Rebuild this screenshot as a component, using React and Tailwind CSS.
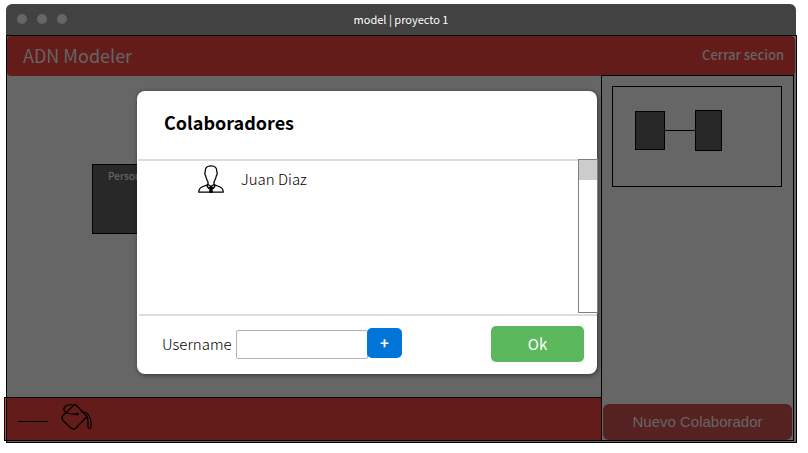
function TitleBar() {
  return (
    <div className="relative mr-px flex h-[31px] items-center justify-center rounded-t-md bg-[#424242] pb-px">
      <div className="absolute left-[11px] flex gap-[10px]">
        <span className="size-[10px] rounded-full bg-[#666]" />
        <span className="size-[10px] rounded-full bg-[#666]" />
        <span className="size-[10px] rounded-full bg-[#666]" />
      </div>
      <span className="text-[11px] text-white">model | proyecto 1</span>
    </div>
  );
}

function Header() {
  return (
    <header className="mr-px flex h-10 shrink-0 items-center justify-between rounded bg-[#631c19] pr-[11px] pb-[2px] pl-4 text-[#666]">
      <h1 className="text-[18px]">ADN Modeler</h1>
      <a href="#salir" className="text-[13px] font-medium">Cerrar secion</a>
    </header>
  );
}

function PaintBucket() {
  return (
    <svg viewBox="0 0 32 30" className="h-[30px] w-8" fill="none" stroke="black" strokeWidth="1.2" strokeLinecap="round" strokeLinejoin="round" aria-hidden="true">
      <path d="M14 3Q15 2 16 3L27 14.500 16 26Q13.500 28.500 11 26L3 18.500Q.8 16 3 13.500Z" />
      <path d="M14 3C8 2 3.500 4 3.800 7.500 4.200 11 9 12.500 17 12" />
      <circle cx="17.200" cy="12" r="0.900" fill="black" />
      <path d="M21.500 10c5.500-1 9 4 9.500 10v5c-.3 2-2.800 2-3 0v-5c0-2-.5-4-1.200-5.200" />
    </svg>
  );
}

function Person() {
  return (
    <svg viewBox="0 0 26 28" className="h-7 w-[26px]" fill="none" stroke="black" strokeWidth="1.3" strokeLinejoin="round" aria-hidden="true">
      <path d="M13 .8C9 .8 6.800 3 7.200 7c-.8.500-.4 3 .4 3.500C8.100 14 9.300 15.500 10 17v2.500L13 21.500l3-2V17c.7-1.500 1.900-3 2.400-6.500.8-.5 1.200-3 .4-3.500C19.200 3 17 .8 13 .8Z" />
      <path d="M10 19.500 4 22C1.500 23 .8 25 .8 27.200h24.400c0-2.200-.7-4.200-3.200-5.200l-6-2.500" />
      <path d="m9.800 19.500-.8 1.500 1.800 2.500L13 21.500l2.200 2L17 21l-.8-1.500" />
      <path d="M12.200 21.800h1.600l.4 5.200h-2.400Z" fill="black" />
    </svg>
  );
}

function Sidebar() {
  return (
    <aside className="-mt-px mr-[2px] mb-px flex w-[193px] shrink-0 flex-col justify-between border border-black px-px pt-[10px]">
      <div className="mr-[10px] ml-[9px] h-[101px] border border-black">
        <svg width="168" height="99" stroke="black" fill="#282828" aria-label="Vista previa">
          <rect x="22.500" y="24.500" width="29" height="38" />
          <rect x="82.500" y="23.500" width="26" height="40" />
          <path d="M52 43.500h30" />
        </svg>
      </div>
      <button className="h-9 rounded-md bg-[#562221] font-['Liberation_Sans',sans-serif] text-[15px] text-[#666]">
        Nuevo Colaborador
      </button>
    </aside>
  );
}

function Toolbar() {
  return (
    <footer className="mb-px -ml-[3px] flex h-11 border-y border-l border-black bg-[#631c19]">
      <span className="w-px bg-[#d9453c]" />
      <span className="w-px bg-black" />
      <div className="flex items-start gap-3 pt-1 pl-[11px]">
        <span className="mt-[19px] h-px w-[30px] bg-black" />
        <PaintBucket />
      </div>
    </footer>
  );
}

function Dialog() {
  return (
    <section role="dialog" aria-labelledby="dialog-title" className="absolute top-[91px] left-[137px] w-[460px] rounded-lg bg-white text-black shadow-[1px_1px_5px_rgba(0,0,0,0.5)]">
      <div className="h-[68px] pt-[19px] pl-[27px]">
        <h2 id="dialog-title" className="text-[18px] font-bold">Colaboradores</h2>
      </div>
      <div className="ml-px flex h-[155px]">
        <ul className="flex-1 border-t-2 border-[#ddd] pt-1 pl-[60px]">
          <li className="flex items-center gap-[17px]">
            <Person />
            <span className="text-[15px] font-light">Juan Diaz</span>
          </li>
        </ul>
        <div className="-mr-px h-[154px] w-5 border border-[#808080]">
          <div className="h-5 bg-[#ccc]" />
        </div>
      </div>
      <form className="ml-[2px] flex h-[60px] items-center border-t-2 border-[#ddd] pr-[13px] pb-[2px] pl-[23px]" onSubmit={(e) => e.preventDefault()}>
        <label htmlFor="username" className="w-[74px] text-[15px] font-light">Username</label>
        <div className="flex items-end pb-[2px]">
          <input id="username" className="-mb-px h-[29px] w-[132px] rounded-xs border border-[#b3b3b3] bg-white px-2 text-[14px]" />
          <button type="button" aria-label="Agregar" className="relative -ml-px h-[30px] w-[35px] rounded-[5px] bg-[#0275d8] text-[15px] font-bold text-white">+</button>
        </div>
        <button type="submit" className="ml-auto h-9 w-[93px] rounded-[5px] bg-[#5cb85c] text-[15px] text-white">Ok</button>
      </form>
    </section>
  );
}

export default function App() {
  return (
    <div className="relative flex min-h-screen flex-col bg-white pt-1 pr-[11px] pb-[10px] pl-[6px] font-['Noto_Sans_CJK_SC','Noto_Sans',sans-serif] leading-6">
      <TitleBar />
      <div className="flex flex-1 flex-col border border-black bg-[#666]">
        <Header />
        <div className="flex flex-1">
          <main className="flex min-w-0 flex-1 flex-col">
            <div className="relative flex-1">
              <div className="absolute top-[88px] left-[85px] h-[70px] w-[100px] border border-black bg-[#282828] pl-[15px] text-[10px] leading-[22px] font-medium text-[#666]">
                Persona
              </div>
            </div>
            <Toolbar />
          </main>
          <Sidebar />
        </div>
      </div>
      <Dialog />
    </div>
  );
}
